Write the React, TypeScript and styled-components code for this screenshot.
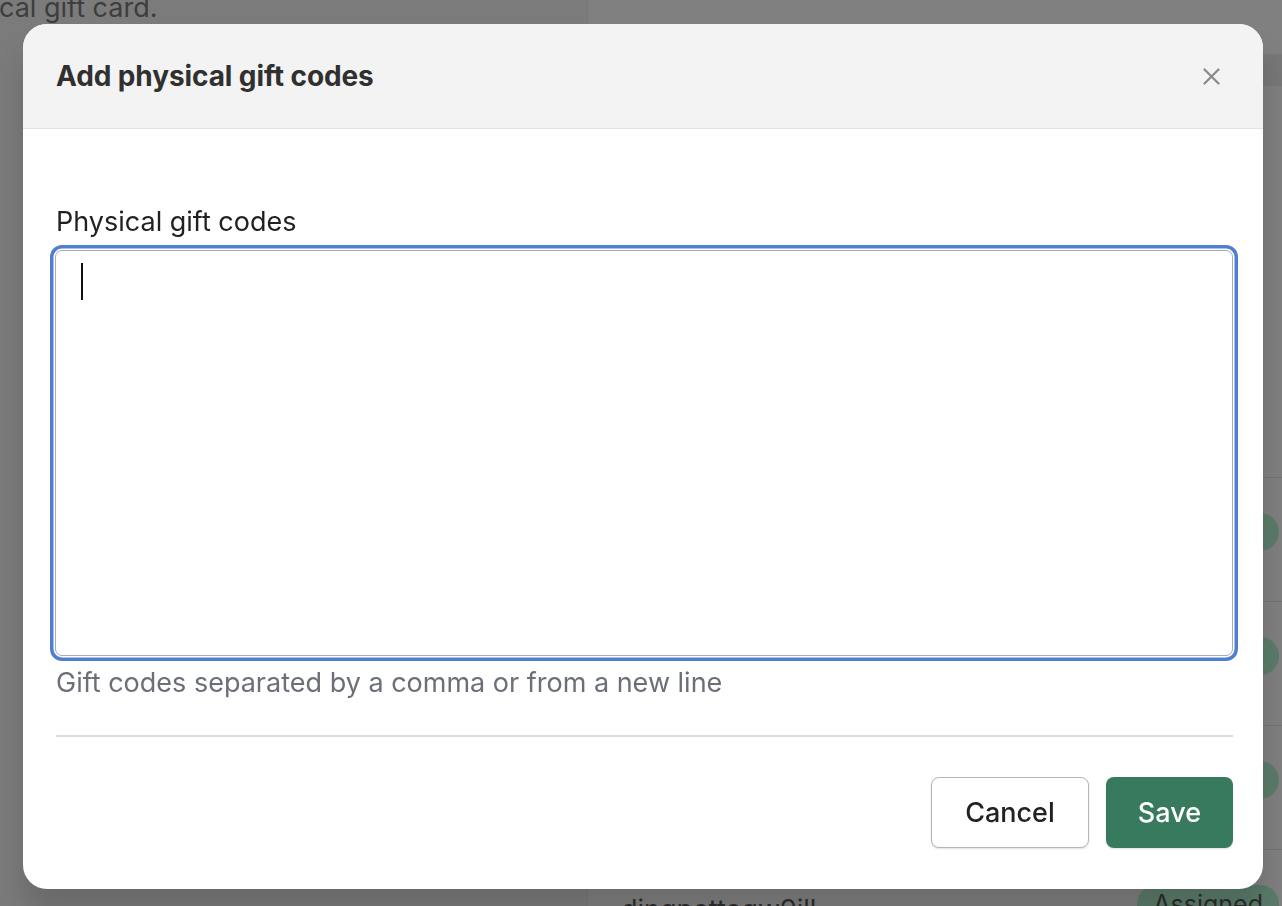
import React from "react";
import styled, { createGlobalStyle } from "styled-components";

const Global = createGlobalStyle`
  html, body { margin: 0; padding: 0; }
  body {
    width: 1282px;
    height: 906px;
    overflow: hidden;
    font-family: Inter, "Noto Sans", "Liberation Sans", sans-serif;
    -webkit-font-smoothing: antialiased;
  }
  * { box-sizing: border-box; }
`;

/* ---------- dimmed page underneath ---------- */
const Page = styled.div`
  display: grid;
  grid-template-columns: 587px 1fr;
  width: 1282px;
  height: 906px;
  overflow: hidden;
`;

const LeftPane = styled.div`
  background: #7b7b7b;
  overflow: hidden;
`;

const FadedText = styled.p`
  margin: -8px 0 0 -1px;
  font-size: 27px;
  line-height: 32px;
  color: #3d3d3d;
`;

const RightPane = styled.div`
  background: #808080;
  border-left: 1px solid #777777;
  display: flex;
  flex-direction: column;
  overflow: hidden;
`;

const TableHead = styled.div`
  margin-top: 54px;
  height: 32px;
  flex-shrink: 0;
  background: #777777;
`;

const TableGap = styled.div`
  height: 392px;
  flex-shrink: 0;
  background: #7f7f7f;
  border-bottom: 1px solid #727272;
`;

const Row = styled.div<{ $last?: boolean }>`
  height: ${(p) => (p.$last ? "56px" : "124px")};
  flex-shrink: 0;
  display: flex;
  align-items: flex-start;
  justify-content: space-between;
  padding: 35px 3px 0 33px;
  border-bottom: ${(p) => (p.$last ? "none" : "1px solid #727272")};
  background: #7f7f7f;
  overflow: hidden;
`;

const CodeText = styled.span`
  font-size: 27px;
  line-height: 38px;
  color: #2e2e2e;
  padding-top: 6px;
`;

const Badge = styled.span`
  display: inline-flex;
  align-items: center;
  height: 38px;
  padding: 0 16px;
  border-radius: 19px;
  background: #5a7b6a;
  color: #2c2c2c;
  font-size: 25px;
`;

/* ---------- modal ---------- */
const Backdrop = styled.div`
  position: fixed;
  inset: 0;
  padding: 24px 0 0 23px;
`;

const Modal = styled.div`
  width: 1240px;
  background: #ffffff;
  border-radius: 24px;
  overflow: hidden;
  box-shadow: 0 26px 30px rgba(0, 0, 0, 0.14);
`;

const Header = styled.div`
  height: 105px;
  background: #f3f3f3;
  border-bottom: 1px solid #e3e3e3;
  display: flex;
  align-items: center;
  justify-content: space-between;
  padding: 0 43px 0 33px;
`;

const Title = styled.h2`
  margin: 0;
  font-size: 28px;
  font-weight: 700;
  color: #303030;
  letter-spacing: -0.1px;
`;

const CloseButton = styled.button`
  border: none;
  background: transparent;
  padding: 0;
  width: 18px;
  height: 18px;
  display: flex;
  align-items: center;
  justify-content: center;
  color: #8a8a8a;
  cursor: pointer;
`;

const Body = styled.div`
  padding: 77px 30px 41px 33px;
  display: flex;
  flex-direction: column;
`;

const Label = styled.label`
  font-size: 27px;
  line-height: 32px;
  color: #1f2123;
  margin-bottom: 12px;
`;

const TextBox = styled.div`
  height: 406px;
  margin-left: -1px;
  border: 1.5px solid #a9abb5;
  border-radius: 7px;
  padding: 12px 25px;
  box-shadow: 0 0 0 1.5px #ffffff, 0 0 0 5px #4f7fd2;
  background: #ffffff;
`;

const Caret = styled.span`
  display: block;
  width: 2px;
  height: 37px;
  background: #111111;
`;

const Help = styled.p`
  margin: 11px 0 0;
  font-size: 27px;
  line-height: 32px;
  color: #6b6f77;
`;

const Divider = styled.hr`
  margin: 36px 0 0;
  border: none;
  height: 1.5px;
  background: #dcdde2;
`;

const Footer = styled.div`
  margin-top: 40px;
  display: flex;
  justify-content: flex-end;
  gap: 17px;
`;

const Button = styled.button<{ $primary?: boolean }>`
  height: 71px;
  padding: 0 ${(p) => (p.$primary ? "32px" : "33px")};
  border-radius: 8px;
  font-family: inherit;
  font-size: 27px;
  font-weight: 500;
  cursor: pointer;
  border: ${(p) => (p.$primary ? "none" : "1.5px solid #b2b4bf")};
  background: ${(p) => (p.$primary ? "#377a5e" : "#ffffff")};
  color: ${(p) => (p.$primary ? "#ffffff" : "#202223")};
  box-shadow: 0 1px 2px rgba(0, 0, 0, 0.12);
`;

export default function App() {
  return (
    <>
      <Global />
      <Page>
        <LeftPane>
          <FadedText>cal gift card.</FadedText>
        </LeftPane>
        <RightPane>
          <TableHead />
          <TableGap />
          <Row>
            <CodeText />
            <Badge>Assigned</Badge>
          </Row>
          <Row>
            <CodeText />
            <Badge>Assigned</Badge>
          </Row>
          <Row>
            <CodeText />
            <Badge>Assigned</Badge>
          </Row>
          <Row $last>
            <CodeText>dingpettegw9ill</CodeText>
            <Badge>Assigned</Badge>
          </Row>
        </RightPane>
      </Page>
      <Backdrop>
        <Modal role="dialog" aria-labelledby="dlg-title">
          <Header>
            <Title id="dlg-title">Add physical gift codes</Title>
            <CloseButton aria-label="Close">
              <svg width="17" height="17" viewBox="0 0 17 17" fill="none">
                <path
                  d="M1.5 1.5 L15.5 15.5 M15.5 1.5 L1.5 15.5"
                  stroke="currentColor"
                  strokeWidth="2.2"
                  strokeLinecap="round"
                />
              </svg>
            </CloseButton>
          </Header>
          <Body>
            <Label>Physical gift codes</Label>
            <TextBox role="textbox" aria-multiline="true">
              <Caret />
            </TextBox>
            <Help>Gift codes separated by a comma or from a new line</Help>
            <Divider />
            <Footer>
              <Button>Cancel</Button>
              <Button $primary>Save</Button>
            </Footer>
          </Body>
        </Modal>
      </Backdrop>
    </>
  );
}
